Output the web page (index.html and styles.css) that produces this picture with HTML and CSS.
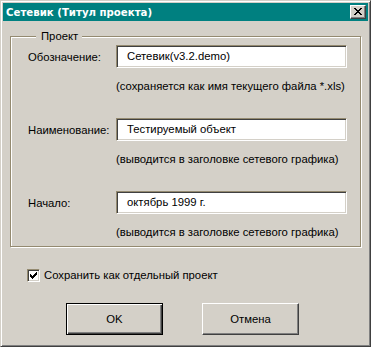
FILE: index.html
```html
<!DOCTYPE html>
<html lang="ru">

<head>
    <meta charset="UTF-8">
    <title>Сетевик (Титул проекта)</title>
    <link rel="stylesheet" href="styles.css">
</head>

<body>
    <div class="window">
        <div class="titlebar">
            <span class="title">Сетевик (Титул проекта)</span>
            <button class="close-btn">
                <svg width="8" height="7" viewBox="0 0 8 7" shape-rendering="crispEdges">
                    <rect x="0" y="0" width="2" height="1" />
                    <rect x="6" y="0" width="2" height="1" />
                    <rect x="1" y="1" width="2" height="1" />
                    <rect x="5" y="1" width="2" height="1" />
                    <rect x="2" y="2" width="4" height="1" />
                    <rect x="3" y="3" width="2" height="1" />
                    <rect x="2" y="4" width="4" height="1" />
                    <rect x="1" y="5" width="2" height="1" />
                    <rect x="5" y="5" width="2" height="1" />
                    <rect x="0" y="6" width="2" height="1" />
                    <rect x="6" y="6" width="2" height="1" />
                </svg>
            </button>
        </div>

        <div class="content">
            <fieldset class="group">
                <legend>Проект</legend>

                <div class="field">
                    <label>Обозначение:</label>
                    <div class="input">Сетевик(v3.2.demo)</div>
                    <div class="hint">(сохраняется как имя текущего файла *.xls)</div>
                </div>

                <div class="field">
                    <label>Наименование:</label>
                    <div class="input">Тестируемый объект</div>
                    <div class="hint">(выводится в заголовке сетевого графика)</div>
                </div>

                <div class="field">
                    <label>Начало:</label>
                    <div class="input">октябрь 1999 г.</div>
                    <div class="hint">(выводится в заголовке сетевого графика)</div>
                </div>
            </fieldset>

            <label class="check-row">
                <span class="checkbox">
                    <svg width="7" height="7" viewBox="0 0 7 7" shape-rendering="crispEdges">
                        <rect x="6" y="0" width="1" height="1" />
                        <rect x="5" y="1" width="2" height="1" />
                        <rect x="0" y="2" width="1" height="1" />
                        <rect x="4" y="2" width="3" height="1" />
                        <rect x="0" y="3" width="2" height="1" />
                        <rect x="3" y="3" width="3" height="1" />
                        <rect x="0" y="4" width="5" height="1" />
                        <rect x="1" y="5" width="3" height="1" />
                        <rect x="2" y="6" width="1" height="1" />
                    </svg>
                </span>
                Сохранить как отдельный проект
            </label>

            <div class="buttons">
                <button class="btn default">OK</button>
                <button class="btn">Отмена</button>
            </div>
        </div>
    </div>
</body>

</html>
```

FILE: styles.css
```css
body {
    margin: 0;
    padding: 0;
    font-family: 'Liberation Sans', Arial, sans-serif;
    font-size: 11.3px;
    color: #000;
    background-color: #d4d0c8;
}

.window {
    box-sizing: border-box;
    width: 371px;
    height: 347px;
    padding: 1px;
    background-color: #d4d0c8;
    border: 1px solid;
    border-color: #d4d0c8 #404040 #404040 #d4d0c8;
    box-shadow: inset 1px 1px 0 #fff, inset -1px -1px 0 #808080;
}

.titlebar {
    margin: 1px;
    height: 18px;
    background-color: #008080;
    display: flex;
    align-items: center;
    justify-content: space-between;
    padding: 0 2px 0 3px;
}

.title {
    color: #fff;
    font-family: 'DejaVu Sans', sans-serif;
    font-weight: bold;
    font-size: 10.2px;
}

.close-btn {
    box-sizing: border-box;
    width: 16px;
    height: 14px;
    padding: 0;
    background-color: #d4d0c8;
    border: 1px solid;
    border-color: #fff #404040 #404040 #fff;
    box-shadow: inset -1px -1px 0 #808080;
    display: flex;
    align-items: center;
    justify-content: center;
}

.close-btn svg {
    fill: #000;
    margin: 0 1px 1px 0;
}

.content {
    padding: 8px 6px 0 8px;
}

.group {
    margin: 0;
    padding: 2px 0 7px 17px;
    width: 351px;
    box-sizing: border-box;
    border: 1px solid #948a70;
    box-shadow: inset 1px 1px 0 #fff, 1px 1px 0 #fff;
}

.group legend {
    margin-left: 8px;
    padding: 0 4px 0 5px;
    line-height: 13px;
    background-color: #d4d0c8;
}

.field {
    display: grid;
    grid-template-columns: 88px 231px;
    margin-top: 25px;
}

.field:first-of-type {
    margin-top: 0;
}

.field label {
    align-self: center;
}

.input {
    box-sizing: border-box;
    height: 23px;
    line-height: 21px;
    padding-left: 10px;
    background-color: #fff;
    border: 1px solid;
    border-color: #948a70 #fff #fff #948a70;
    box-shadow: inset 1px 1px 0 #404040, inset -1px -1px 0 #d4d0c8;
}

.hint {
    grid-column: 2;
    margin-top: 12px;
    line-height: 13px;
    white-space: nowrap;
}

.check-row {
    display: flex;
    align-items: center;
    gap: 4px;
    margin: 22px 0 0 17px;
    line-height: 13px;
}

.checkbox {
    box-sizing: border-box;
    width: 13px;
    height: 13px;
    background-color: #fff;
    border: 1px solid;
    border-color: #948a70 #fff #fff #948a70;
    box-shadow: inset 1px 1px 0 #404040, inset -1px -1px 0 #d4d0c8;
    display: flex;
    align-items: center;
    justify-content: center;
}

.checkbox svg {
    fill: #000;
}

.buttons {
    display: flex;
    gap: 39px;
    margin: 21px 0 0 56px;
}

.btn {
    box-sizing: border-box;
    width: 97px;
    height: 32px;
    padding: 0;
    font-family: 'Liberation Sans', Arial, sans-serif;
    font-size: 11.3px;
    color: #000;
    background-color: #d4d0c8;
    border: 1px solid;
    border-color: #fff #404040 #404040 #fff;
    box-shadow: inset -1px -1px 0 #808080;
}

.btn.default {
    border: 1px solid #000;
    box-shadow: inset 1px 1px 0 #fff, inset -1px -1px 0 #404040, inset -2px -2px 0 #808080;
}
```
